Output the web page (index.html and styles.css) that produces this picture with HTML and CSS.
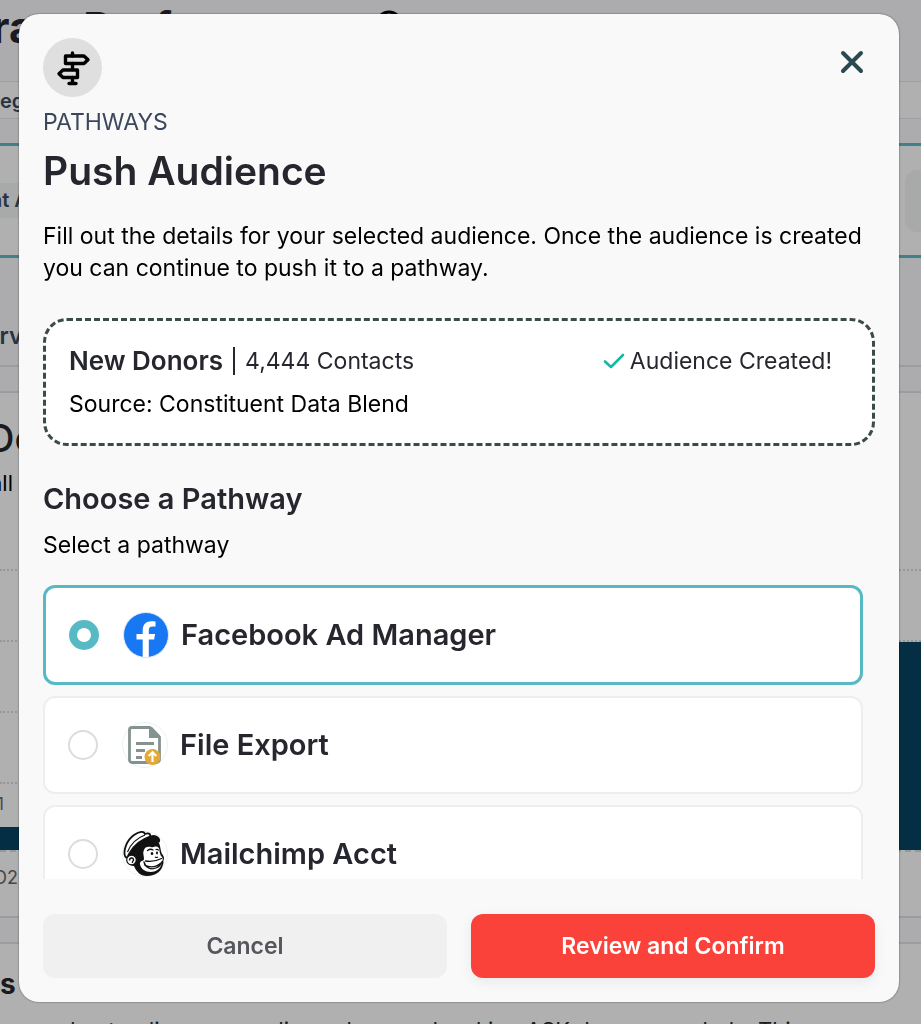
FILE: index.html
```html
<!DOCTYPE html>
<html lang="en">
<head>
<meta charset="utf-8">
<title>Push Audience</title>
<meta name="viewport" content="width=device-width, initial-scale=1">
<link rel="stylesheet" href="styles.css">
</head>
<body>
<div class="page" aria-hidden="true">
  <header class="page-head">
    <span class="page-title">ram Performance</span>
    <svg class="info" viewBox="0 0 28 28"><circle cx="14" cy="14" r="12" fill="none" stroke="#000" stroke-width="3"/></svg>
  </header>
  <div class="tabs">eg</div>
  <div class="filters"><span class="filter-chip">nt A</span><span class="filter-button"></span></div>
  <div class="interval">erv</div>
  <section class="chart-card">
    <div class="chart-title">Do</div>
    <div class="chart-sub">all</div>
    <div class="plot">
      <div class="grid-row"></div>
      <div class="grid-row"></div>
      <div class="grid-row"></div>
      <div class="grid-row"><span class="tick">1</span></div>
      <div class="bar bar-left"></div>
      <div class="bar bar-right"></div>
    </div>
    <div class="axis">D2</div>
  </section>
  <section class="text-card">
    <div class="text-title">s</div>
    <p class="text-body">understanding your audience here and making ASK donors regularly. This</p>
  </section>
</div>

<div class="backdrop">
  <main class="modal" role="dialog" aria-labelledby="dialog-title">
    <button class="close" type="button" aria-label="Close">
      <svg viewBox="0 0 24 24"><path d="M3 3 21 21M21 3 3 21" fill="none" stroke="#29484f" stroke-width="4" stroke-linecap="round"/></svg>
    </button>
    <div class="badge">
      <svg viewBox="0 0 36 36"><g fill="none" stroke="#000" stroke-width="3.400" stroke-linejoin="round" stroke-linecap="round"><path d="M17.500 3v3M17.500 13.500v6M17.500 27.500v6M14 33.500h7"/><path d="M10.500 6H29l4 3.700-4 3.800H10.500z"/><path d="M22.500 20H8l-4 3.700 4 3.800h14.500z"/></g></svg>
    </div>
    <p class="eyebrow">PATHWAYS</p>
    <h1 class="title" id="dialog-title">Push Audience</h1>
    <p class="intro">Fill out the details for your selected audience. Once the audience is created you can continue to push it to a pathway.</p>

    <section class="summary">
      <div class="summary-row">
        <p class="audience"><strong>New Donors</strong><span class="divider"></span><span>4,444 Contacts</span></p>
        <p class="created"><svg viewBox="0 0 22 18"><path d="M2 9.500 8 15 20 3" fill="none" stroke="#14b8a6" stroke-width="2.600" stroke-linecap="round" stroke-linejoin="round"/></svg>Audience Created!</p>
      </div>
      <p class="source">Source: Constituent Data Blend</p>
    </section>

    <h2 class="subtitle" id="choose">Choose a Pathway</h2>
    <p class="hint">Select a pathway</p>

    <div class="options" role="radiogroup" aria-labelledby="choose">
      <label class="option">
        <input class="radio" type="radio" name="pathway" checked>
        <svg class="logo" viewBox="0 0 46 46"><circle cx="23" cy="23" r="22.500" fill="#1877f2" stroke="#dcecf5"/><path d="M19.700 45V27.500H13.500V22h6.200v-3.500c0-6.300 3.500-9.300 8.800-9.300 1.500 0 3 .2 4 .4v5h-2.800c-3 0-3.900 1.600-3.900 3.800V22h6.300l-1 5.500h-5.300V45z" fill="#fff"/></svg>
        <span class="option-name">Facebook Ad Manager</span>
      </label>
      <label class="option">
        <input class="radio" type="radio" name="pathway">
        <svg class="logo" viewBox="0 0 46 46"><circle cx="23" cy="23" r="22.500" fill="#fff" stroke="#e6f2f6"/><path d="M10 5.500h18L37.500 15v22.500a3 3 0 0 1-3 3H10a2.500 2.500 0 0 1-2.500-2.500V8a2.500 2.500 0 0 1 2.500-2.500z" fill="#fff" stroke="#84938f" stroke-width="2.800" stroke-linejoin="round"/><path d="M27 5.500V16h11V13.500L30 5z" fill="#84938f"/><path d="M14 21.500h18M14 28.500h9M14 35.500h6" stroke="#84938f" stroke-width="2.800"/><circle cx="30.500" cy="35" r="8" fill="#e0a938"/><path d="M30.500 40v-9M26.700 34 30.500 30.300l3.800 3.700" fill="none" stroke="#fff" stroke-width="2.200"/></svg>
        <span class="option-name">File Export</span>
      </label>
      <label class="option">
        <input class="radio" type="radio" name="pathway">
        <svg class="logo" viewBox="0 0 46 46">
          <circle cx="23" cy="23" r="22.500" fill="#fff" stroke="#e6f2f6"/>
          <path d="M7 23C9 14 17 8 26 7c7 0 11 3 12 8 .5 3 1 5 1.500 7 1 2 2.500 3 2.500 5 0 2-1 2.500-.5 5C40 40 34 45 25 45c-7 0-11-5-13-10-4 0-6-3-6-6 0-2 .5-4 1-6z" fill="#111"/>
          <path d="M3 25C1 19 5 9 12 4c6-4 10-4 11-1 3-1.500 6-.5 5 2.500-9 3-16 9-20 16-1.500 2-2 3-2.500 4.500C4.500 27 3.500 26.500 3 25z" fill="#fff" stroke="#111" stroke-width="1.800"/>
          <path d="M5.500 21C9 12 15 7 23 4" fill="none" stroke="#111" stroke-width="1.200"/>
          <path d="M25 7c4-4 9-4 12-.5 1.500 2 1.500 4 0 5.500-3-3-7-4-12-4z" fill="#111"/>
          <path d="M22 19c.5-3 4-4 7-3 1.500.5 2.500 0 4-.5 3-.5 4.500 1.500 4.500 4 0 2 .8 3.500 1.200 5 1.300 1.500 2.300 2.500 2 4-.2 1.500-1.200 2-1 4-1 5-6 8.500-11 8.500-5.500 0-9.500-3-10.500-7-.8-3 1-4 3-4.500 1.500-1 .5-3.500.3-5.500-.3-2-.3-3.500.5-5z" fill="#fff"/>
          <path d="M25.500 19.500c2-1.500 4-1.500 5.500-.5M34 18.500c1-.3 2 0 2.500.6M23.500 30c5 1 10 .5 16-2.500M22.500 34c6 3 12 2 16.500-2M22 31c1.500 6 7 8 12 6 3-1.200 5-3 5.700-6" fill="none" stroke="#111" stroke-width="1.300" stroke-linecap="round"/>
          <ellipse cx="30" cy="22.500" rx="1.300" ry="1.500" fill="#111"/><ellipse cx="35" cy="22" rx="1" ry="1.400" fill="#111"/>
          <path d="M33 26c1 .8 2.500.5 3-.2" fill="none" stroke="#111" stroke-width="1.200"/>
          <circle cx="9.500" cy="29" r="4.800" fill="#fff" stroke="#111" stroke-width="1.200"/>
          <path d="M7.500 29.500c0-3 4-3.500 4-.5 0 1-1.500 1-1 3" fill="none" stroke="#111" stroke-width="1.400"/>
        </svg>
        <span class="option-name">Mailchimp Acct</span>
      </label>
    </div>

    <div class="actions">
      <button class="btn btn-cancel" type="button">Cancel</button>
      <button class="btn btn-confirm" type="button">Review and Confirm</button>
    </div>
  </main>
</div>
</body>
</html>
```
FILE: styles.css
```css
* { box-sizing: border-box; }
html, body { height: 100%; }
body { margin: 0; font-family: Inter, "Liberation Sans", sans-serif; color: #26262e; overflow: hidden; }
h1, h2, p { margin: 0; }

.page { height: 100%; overflow: hidden; background: #f7f7fa; line-height: 1; }
.page > *, .page section { white-space: nowrap; }
.page-head { display: flex; gap: 18px; height: 81px; margin-left: -8px; padding-top: 4px; }
.page-title { font-size: 43px; font-weight: 700; line-height: 46px; }
.info { width: 28px; height: 28px; margin-top: 6px; }
.tabs { height: 38px; padding-top: 9px; border: solid #e4e4ea; border-width: 1px 0; background: #fdfdfd; color: #3a4a60; font-size: 20px; font-weight: 600; }
.filters { display: flex; align-items: center; justify-content: space-between; height: 115px; margin-top: 24px; border: solid #5ab9c2; border-width: 3px 0; background: #fdfdfd; }
.filter-chip { width: 60px; height: 35px; margin-left: -10px; background: #f1f3f3; color: #3a4a60; font-size: 20px; font-weight: 600; line-height: 35px; }
.filter-button { width: 16px; height: 62px; border-radius: 12px 0 0 12px; background: #f1f3f3; }
.interval { height: 109px; margin-left: -14px; padding-top: 67px; border-bottom: 2px solid #dedee6; color: #3a4a60; font-size: 23px; font-weight: 600; }
.chart-card { height: 527px; margin-top: 24px; border: solid #dedee6; border-width: 2px 0; background: #fdfdfd; overflow: hidden; }
.chart-title { height: 70px; margin-left: -13px; padding-top: 26px; font-size: 38px; font-weight: 500; }
.chart-sub { height: 106px; margin-left: -10px; padding-top: 9px; color: #000; font-size: 22px; }
.plot { position: relative; height: 283px; border-bottom: 2px dashed #d5dada; }
.grid-row { height: 71px; border-top: 2px dotted #d5dada; }
.tick { display: block; padding-top: 12px; margin-left: -3px; color: #666; font-size: 17px; }
.bar { position: absolute; bottom: 0; background: #064360; }
.bar-left { left: 0; width: 40px; height: 23px; }
.bar-right { right: 0; width: 40px; height: 208px; }
.axis { margin-left: -6px; padding-top: 17px; color: #666; font-size: 18px; }
.text-card { height: 120px; margin-top: 24px; border-top: 2px solid #dedee6; background: #fdfdfd; }
.text-title { height: 76px; padding-top: 26px; font-size: 28px; font-weight: 700; }
.text-body { padding-left: 36px; font-size: 22px; line-height: 20px; }

.backdrop { position: fixed; inset: 0; padding: 14px 22px 22px 19px; background: rgba(0, 0, 0, .3); }
.modal { position: relative; display: flex; flex-direction: column; height: 100%; padding: 24px; border-radius: 20px; background: #f9f9f9; box-shadow: 0 0 2px rgba(0, 0, 0, .6); }
.modal > * { flex-shrink: 0; }
.close { position: absolute; top: 36px; right: 35px; width: 24px; height: 24px; padding: 0; border: 0; background: none; }
.close svg { display: block; }
.badge { display: grid; place-items: center; width: 59px; height: 59px; border-radius: 50%; background: #dfdfdf; }
.badge svg { width: 36px; height: 36px; }
.eyebrow { margin-top: 9px; color: #3b475b; font-size: 23px; line-height: 32px; }
.title { margin-top: 8px; font-size: 39px; font-weight: 600; line-height: 50px; }
.intro { margin-top: 24px; color: #000; font-size: 23px; line-height: 32px; }

.summary { margin-top: 34px; padding: 22px 40px 21px 23px; border: 3px dashed #3b4b47; border-radius: 24px; background: #fff; font-size: 23px; line-height: 36px; }
.summary-row { display: flex; justify-content: space-between; margin-bottom: 7px; }
.audience, .created { display: flex; align-items: center; }
.audience strong { font-size: 26px; font-weight: 600; }
.divider { width: 2px; height: 28px; margin: 0 10px; background: #26262e; }
.created { gap: 5px; }
.created svg { width: 22px; height: 18px; }
.source { color: #000; }

.subtitle { margin-top: 34px; font-size: 29px; font-weight: 600; line-height: 38px; }
.hint { margin-top: 11px; color: #000; font-size: 23px; line-height: 32px; }
.modal .options { display: flex; flex: 1 1 0; flex-direction: column; gap: 11px; min-height: 0; margin-top: 24px; padding-right: 12px; overflow: hidden; }
.option { display: flex; flex-shrink: 0; align-items: center; gap: 12px; min-height: 98px; padding: 0 23px; border: 2px solid #eeeef0; border-radius: 12px; background: #fff; font-size: 29px; font-weight: 600; }
.option:has(:checked) { min-height: 100px; border: 3px solid #57b9c3; }
.option-name { padding-bottom: 2px; }
.radio { appearance: none; width: 30px; height: 30px; margin: 0 12px 0 0; border: 2px solid #dcdcdf; border-radius: 50%; background: #fff; }
.radio:checked { border: 8px solid #57b9c3; }
.logo { width: 46px; height: 46px; }

.actions { display: flex; gap: 24px; margin-top: 35px; }
.btn { flex: 1; height: 64px; border: 0; border-radius: 12px; font: 600 23px/32px Inter, "Liberation Sans", sans-serif; }
.btn-cancel { background: #f0f0f0; color: #55565e; }
.btn-confirm { background: #fb423a; color: #fff; box-shadow: 0 4px 12px rgba(100, 120, 140, .12); }
```
